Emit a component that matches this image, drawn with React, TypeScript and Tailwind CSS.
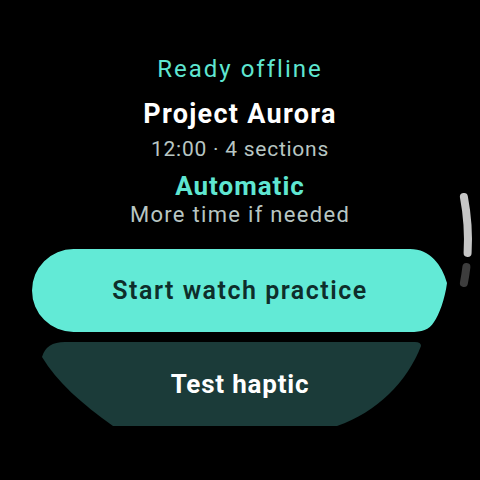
import React from "react";

const ScrollIndicator = () => (
  <svg className="absolute inset-0 pointer-events-none" width="480" height="480" viewBox="0 0 480 480">
    <path d="M463.9,197 A228,228 0 0 1 467.6,253" stroke="#c6c6c6" strokeWidth="8" strokeLinecap="round" fill="none" />
    <path d="M466.4,267 A228,228 0 0 1 463.9,283" stroke="#3d3d3d" strokeWidth="8" strokeLinecap="round" fill="none" />
  </svg>
);

export default function App() {
  return (
    <div className="relative w-[480px] h-[480px] bg-black overflow-hidden font-['Roboto',sans-serif]">
      <div className="flex flex-col items-center pt-[55px]">
        {/* header */}
        <p className="text-[24px] leading-[28px] tracking-[2px] text-[#5fe6d1]">Ready offline</p>
        <h1 className="mt-[15px] text-[27px] leading-[32px] tracking-[1.3px] font-bold text-white">Project Aurora</h1>
        <p className="mt-[7px] text-[21px] leading-[24px] tracking-[0.75px] text-[#b8c6c3]">12:00 · 4 sections</p>
        <p className="mt-[11px] text-[26px] leading-[28px] tracking-[1px] font-bold text-[#5fe6d1]">Automatic</p>
        <p className="mt-[3px] text-[22px] leading-[24px] tracking-[1.3px] text-[#b8c6c3]">More time if needed</p>

        {/* actions */}
        <div className="mt-[22px] w-full px-[32px] flex flex-col gap-[10px]">
          <button className="h-[83px] w-[416px] bg-[#62ead6] text-[#0e2e2b] text-[25px] tracking-[1.5px] font-semibold [clip-path:path('M41.5,0_L378,0_C398,0_410,16_415,34_C413,50_407,66_402,73_C397,81_390,83_378,83_L41.5,83_A41.5,41.5_0_0_1_41.5,0_Z')]">
            Start watch practice
          </button>
          <button className="h-[84px] w-[416px] bg-[#1b3b39] text-white text-[26px] tracking-[0.8px] font-bold [clip-path:path('M33,0_L383,0_Q389,0_389,4_C375,40_345,70_305,84_L81,84_C50,62_25,40_10,15_Q14,0_33,0_Z')]">
            Test haptic
          </button>
        </div>
      </div>
      <ScrollIndicator />
    </div>
  );
}
